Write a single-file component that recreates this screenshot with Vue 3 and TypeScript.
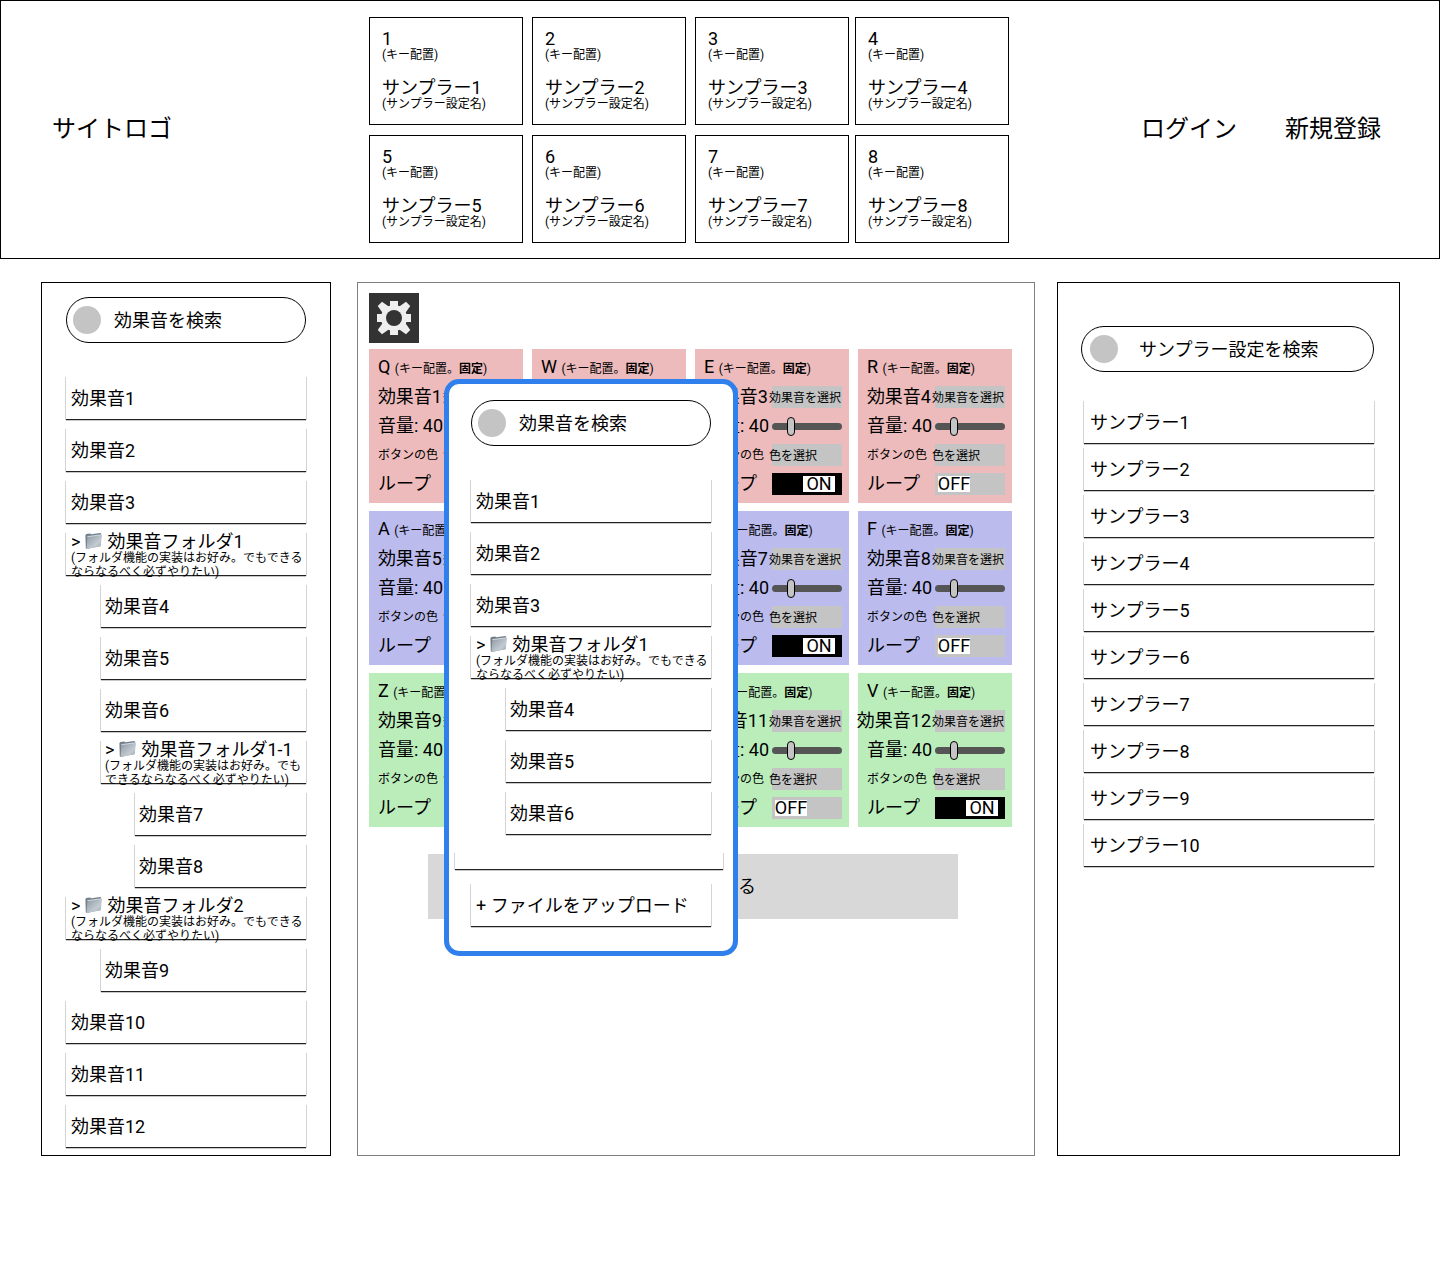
<script setup lang="ts">
import { ref } from 'vue'

interface Sound {
  label: string
  depth: number
  folder?: boolean
}

interface Pad {
  key: string
  no: number
  tone: 'red' | 'blue' | 'green'
  volume: number
  loop: boolean
}

const folderNote = '(フォルダ機能の実装はお好み。でもできるならなるべく必ずやりたい)'

const sound = (no: number, depth = 0): Sound => ({ label: `効果音${no}`, depth })
const folder = (name: string, depth = 0): Sound => ({ label: `効果音フォルダ${name}`, depth, folder: true })

const sounds: Sound[] = [
  sound(1),
  sound(2),
  sound(3),
  folder('1'),
  sound(4, 1),
  sound(5, 1),
  sound(6, 1),
  folder('1-1', 1),
  sound(7, 2),
  sound(8, 2),
  folder('2'),
  sound(9, 1),
  sound(10),
  sound(11),
  sound(12),
]

const libraries = { side: sounds, dialog: sounds.slice(0, 7) }

const rows: { tone: Pad['tone']; keys: string; loops: boolean[] }[] = [
  { tone: 'red', keys: 'QWER', loops: [false, false, true, false] },
  { tone: 'blue', keys: 'ASDF', loops: [false, false, true, false] },
  { tone: 'green', keys: 'ZXCV', loops: [false, false, false, true] },
]

const pads = ref<Pad[]>(
  rows.flatMap((row, r) =>
    [...row.keys].map((key, c) => ({
      key,
      no: r * 4 + c + 1,
      tone: row.tone,
      volume: 40,
      loop: row.loops[c],
    })),
  ),
)
</script>

<template>
  <div class="page">
    <header class="header">
      <div class="logo">サイトロゴ</div>
      <div class="slots">
        <button v-for="n in 8" :key="n" type="button" class="slot">
          <span class="slot-title">{{ n }}</span>
          <span class="slot-note">(キー配置)</span>
          <span class="slot-title slot-name">サンプラー{{ n }}</span>
          <span class="slot-note">(サンプラー設定名)</span>
        </button>
      </div>
      <nav class="nav">
        <a href="#login">ログイン</a>
        <a href="#signup">新規登録</a>
      </nav>
    </header>

    <main class="columns">
      <aside class="panel sounds">
        <label class="search">
          <span class="search-dot"></span>
          <input type="search" placeholder="効果音を検索" aria-label="効果音を検索" />
        </label>
        <ul class="list">
          <li
            v-for="item in libraries.side"
            :key="item.label"
            class="item"
            :class="[`depth-${item.depth}`, { folder: item.folder }]"
          >
            <template v-if="item.folder">
              <div class="folder-title">
                <span>&gt;</span>
                <svg class="folder-icon" viewBox="0 0 17 18" aria-hidden="true">
                  <defs>
                    <linearGradient id="folder-face" x1="0" y1="0" x2="1" y2="1">
                      <stop offset="0" stop-color="#8d98a3" />
                      <stop offset=".65" stop-color="#c3cbd2" />
                      <stop offset="1" stop-color="#9aa5ae" />
                    </linearGradient>
                  </defs>
                  <path d="M.4 2.200 1.200 1 5.200.5 6.200 1.300 15.400 0 16.200.8 15.500 13 1.500 15.900.8 15z" fill="#74808b" />
                  <path d="M2.400 3.600 17 1.700 15.700 13.200 1.500 16z" fill="url(#folder-face)" />
                  <path d="M2.400 3.600 17 1.700" stroke="#e3e8ec" stroke-width=".8" />
                </svg>
                <span>{{ item.label }}</span>
              </div>
              <p class="folder-note">{{ folderNote }}</p>
            </template>
            <template v-else>{{ item.label }}</template>
          </li>
        </ul>
      </aside>

      <section class="panel board">
        <button type="button" class="gear" aria-label="設定">
          <svg viewBox="0 0 50 50" aria-hidden="true">
            <g fill="#eee">
              <circle cx="25" cy="25" r="13" />
              <path v-for="a in [0, 90, 180, 270]" :key="a" d="M21 8h8v7h-8z" :transform="`rotate(${a} 25 25)`" />
              <path v-for="a in [45, 135, 225, 315]" :key="a" d="M22 5h6L29.500 14h-9z" :transform="`rotate(${a} 25 25)`" />
            </g>
            <circle cx="25" cy="25" r="8" fill="#333" />
          </svg>
        </button>

        <div class="pads">
          <article v-for="pad in pads" :key="pad.key" class="pad" :class="pad.tone">
            <div class="pad-key">{{ pad.key }} <small>(キー配置。<b>固定</b>)</small></div>
            <div class="pad-row">
              <span class="pad-label pad-name">効果音{{ pad.no }}</span>
              <button type="button" class="pick">効果音を選択</button>
            </div>
            <div class="pad-row">
              <label class="pad-label" :for="`volume-${pad.key}`">音量: {{ pad.volume }}</label>
              <input :id="`volume-${pad.key}`" class="slider" type="range" min="0" max="170" v-model.number="pad.volume" />
            </div>
            <div class="pad-row">
              <span class="pad-label small">ボタンの色</span>
              <button type="button" class="pick">色を選択</button>
            </div>
            <div class="pad-row">
              <span class="pad-label">ループ</span>
              <button
                type="button"
                class="toggle"
                :class="{ on: pad.loop }"
                role="switch"
                aria-label="ループ"
                :aria-checked="pad.loop"
                @click="pad.loop = !pad.loop"
              >
                <span class="knob">{{ pad.loop ? 'ON' : 'OFF' }}</span>
              </button>
            </div>
          </article>
        </div>

        <button type="button" class="save">設定を保存する</button>

        <div class="dialog" role="dialog" aria-label="効果音を選択">
          <label class="search">
            <span class="search-dot"></span>
            <input type="search" placeholder="効果音を検索" aria-label="効果音を検索" />
          </label>
          <ul class="list">
            <li
              v-for="item in libraries.dialog"
              :key="item.label"
              class="item"
              :class="[`depth-${item.depth}`, { folder: item.folder }]"
            >
              <template v-if="item.folder">
                <div class="folder-title">
                  <span>&gt;</span>
                  <svg class="folder-icon" viewBox="0 0 17 18" aria-hidden="true">
                    <path d="M.4 2.200 1.200 1 5.200.5 6.200 1.300 15.400 0 16.200.8 15.500 13 1.500 15.900.8 15z" fill="#74808b" />
                    <path d="M2.400 3.600 17 1.700 15.700 13.200 1.500 16z" fill="url(#folder-face)" />
                    <path d="M2.400 3.600 17 1.700" stroke="#e3e8ec" stroke-width=".8" />
                  </svg>
                  <span>{{ item.label }}</span>
                </div>
                <p class="folder-note">{{ folderNote }}</p>
              </template>
              <template v-else>{{ item.label }}</template>
            </li>
          </ul>
          <div class="item list-end"></div>
          <button type="button" class="item upload">+ ファイルをアップロード</button>
        </div>
      </section>

      <aside class="panel samplers">
        <label class="search wide">
          <span class="search-dot"></span>
          <input type="search" placeholder="サンプラー設定を検索" aria-label="サンプラー設定を検索" />
        </label>
        <ul class="list compact">
          <li v-for="n in 10" :key="n" class="item">サンプラー{{ n }}</li>
        </ul>
      </aside>
    </main>
  </div>
</template>

<style>
body {
  margin: 0;
  background: #fff;
}
</style>

<style scoped>
.page {
  font-family: Roboto, 'Noto Sans CJK JP', sans-serif;
  font-size: 18px;
  line-height: 18px;
  color: #000;
  min-width: 1240px;
}
*,
*::before {
  box-sizing: border-box;
}
button,
input {
  font: inherit;
  color: inherit;
  margin: 0;
  padding: 0;
  border: 0;
  border-radius: 0;
  background: none;
}
button {
  cursor: pointer;
}
ul,
p {
  list-style: none;
  margin: 0;
  padding: 0;
}

.header {
  display: grid;
  grid-template-columns: 368fr 640px 430fr;
  align-items: center;
  padding: 16px 0 15px;
  border: 1px solid #000;
}
.logo,
.nav {
  padding-bottom: 2px;
  font-size: 24px;
  line-height: 28px;
}
.logo {
  padding-left: 51px;
}
.slots {
  display: grid;
  grid-template-columns: 163px 163px 160px 154px;
  row-gap: 10px;
}
.slot {
  display: flex;
  flex-direction: column;
  align-items: flex-start;
  width: 154px;
  padding: 12px 12px 13px;
  border: 1px solid #000;
}
.slot-title {
  line-height: 18px;
}
.slot-name {
  margin-top: 17px;
}
.slot-note {
  font-size: 12px;
  line-height: 14px;
}
.nav {
  display: flex;
  justify-content: flex-end;
  gap: 48px;
  padding-right: 58px;
}
.nav a {
  color: inherit;
  text-decoration: none;
}

.columns {
  display: grid;
  grid-template-columns: 290px 1fr 343px;
  padding: 23px 40px 118px 41px;
}
.panel {
  border: 1px solid #000;
}
.sounds {
  padding: 14px 24px 7px;
}
.samplers {
  padding: 43px 25px 24px 23px;
}
.board {
  position: relative;
  margin: 0 22px 0 26px;
  padding: 10px 11px;
  border-color: #808080;
}

.search {
  display: flex;
  align-items: center;
  gap: 13px;
  height: 46px;
  padding: 0 6px;
  border: 1px solid #000;
  border-radius: 23px;
}
.search.wide {
  gap: 21px;
  padding: 0 8px;
}
.search-dot {
  flex: none;
  width: 28px;
  height: 28px;
  border-radius: 50%;
  background: #c4c4c4;
}
.search input {
  flex: 1;
  min-width: 0;
  height: 28px;
  outline: none;
}
.search input::placeholder {
  color: #000;
  opacity: 1;
}

.list {
  display: flex;
  flex-direction: column;
  gap: 9px;
  margin-top: 34px;
}
.list.compact {
  gap: 4px;
  margin: 29px 0 0 3px;
}
.item {
  display: flex;
  align-items: center;
  height: 43px;
  padding: 2px 5px 0;
  border-bottom: 1px solid #222;
  box-shadow: -1px 0 #d4d4d4, 1px 0 #d4d4d4, 0 1px #c8c8c8;
}
.compact .item {
  padding: 2px 6px 0;
}
.item.folder {
  display: block;
  padding-top: 0;
  padding-right: 0;
}
.depth-1,
.depth-2 {
  padding-left: 4px;
}
.depth-1 {
  margin-left: 35px;
}
.depth-2 {
  margin-left: 69px;
}
.folder-title {
  display: flex;
  align-items: center;
  gap: 5px;
  line-height: 18px;
  white-space: nowrap;
}
.folder-icon {
  width: 17px;
  height: 18px;
}
.folder-note {
  font-size: 12px;
  line-height: 14px;
}

.gear {
  display: block;
  width: 50px;
  height: 50px;
  background: #333;
}
.gear svg {
  display: block;
}
.pads {
  display: grid;
  grid-template-columns: repeat(4, 154px);
  gap: 8px 9px;
  margin-top: 6px;
}
.pad {
  display: flex;
  flex-direction: column;
  gap: 7px;
  height: 154px;
  padding: 8px 7px 8px 9px;
}
.red {
  background: #edbbbb;
}
.blue {
  background: #bbbbed;
}
.green {
  background: #bbedbb;
}
.pad-key {
  height: 22px;
  line-height: 20px;
  white-space: nowrap;
}
.pad-key small {
  font-size: 12px;
}
.pad-row {
  display: flex;
  align-items: center;
  gap: 4px;
  height: 22px;
}
.pad-label {
  flex: none;
  width: 64px;
  white-space: nowrap;
}
.pad-name {
  display: flex;
  justify-content: flex-end;
}
.small {
  font-size: 12px;
}
.pick {
  width: 70px;
  height: 22px;
  padding-top: 2px;
  font-size: 12px;
  text-align: left;
  text-indent: -3px;
  white-space: nowrap;
  background: #c4c4c4;
}
.slider {
  appearance: none;
  width: 70px;
  height: 20px;
}
.slider::-webkit-slider-runnable-track {
  height: 7px;
  border-radius: 4px;
  background: #555;
}
.slider::-webkit-slider-thumb {
  appearance: none;
  width: 8px;
  height: 19px;
  margin-top: -6px;
  border: 1px solid #000;
  border-radius: 4px;
  background: #c4c4c4;
}
.toggle {
  display: flex;
  align-items: center;
  width: 70px;
  height: 22px;
  padding: 0 3px;
  background: #c4c4c4;
}
.toggle.on {
  justify-content: flex-end;
  padding: 0 7px;
  background: #000;
}
.knob {
  display: flex;
  align-items: center;
  justify-content: center;
  width: 32px;
  height: 16px;
  background: #fff;
}
.save {
  display: block;
  width: calc(100% - 124px);
  height: 65px;
  margin: 27px 0 0 59px;
  background: #d8d8d8;
}

.dialog {
  position: absolute;
  top: 96px;
  left: 86px;
  width: 294px;
  padding: 16px 22px 24px;
  border: 5px solid #2f80ed;
  border-radius: 15px;
  background: #fff;
}
.list-end {
  height: 17px;
  margin: 18px -12px 0 -16px;
}
.upload {
  width: 100%;
  margin-top: 14px;
  border-bottom: 1px solid #222;
}
</style>
